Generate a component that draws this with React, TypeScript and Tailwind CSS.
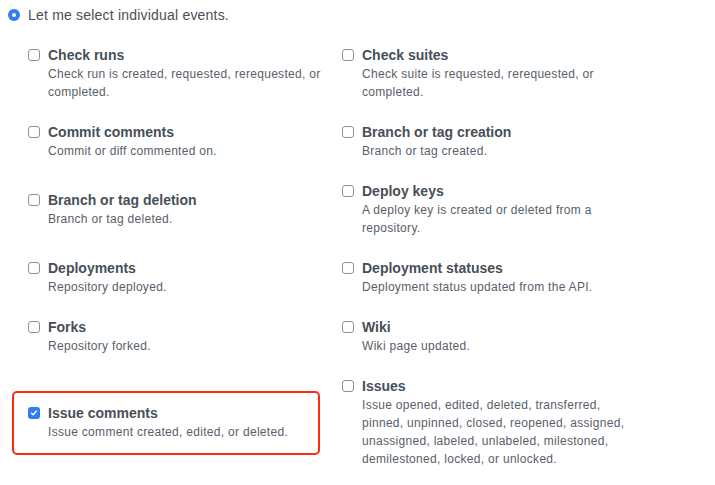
import React from "react";

interface HookEvent {
  title: string;
  description: string;
  checked?: boolean;
  highlighted?: boolean;
}

// rows of [left, right]
const rows: [HookEvent, HookEvent][] = [
  [
    { title: "Check runs", description: "Check run is created, requested, rerequested, or completed." },
    { title: "Check suites", description: "Check suite is requested, rerequested, or completed." },
  ],
  [
    { title: "Commit comments", description: "Commit or diff commented on." },
    { title: "Branch or tag creation", description: "Branch or tag created." },
  ],
  [
    { title: "Branch or tag deletion", description: "Branch or tag deleted." },
    { title: "Deploy keys", description: "A deploy key is created or deleted from a repository." },
  ],
  [
    { title: "Deployments", description: "Repository deployed." },
    { title: "Deployment statuses", description: "Deployment status updated from the API." },
  ],
  [
    { title: "Forks", description: "Repository forked." },
    { title: "Wiki", description: "Wiki page updated." },
  ],
  [
    {
      title: "Issue comments",
      description: "Issue comment created, edited, or deleted.",
      checked: true,
      highlighted: true,
    },
    {
      title: "Issues",
      description:
        "Issue opened, edited, deleted, transferred, pinned, unpinned, closed, reopened, assigned, unassigned, labeled, unlabeled, milestoned, demilestoned, locked, or unlocked.",
    },
  ],
];

function Checkbox({ checked }: { checked?: boolean }) {
  if (checked) {
    return (
      <span className="mt-1 flex h-3 w-3 shrink-0 items-center justify-center rounded-[3px] bg-[#2f7cf6]">
        <svg width="8" height="8" viewBox="0 0 8 8" fill="none">
          <path d="M1.5 4.2 L3.2 5.8 L6.5 2" stroke="white" strokeWidth="1.4" strokeLinecap="round" strokeLinejoin="round" />
        </svg>
      </span>
    );
  }
  return <span className="mt-1 h-3 w-3 shrink-0 rounded-[3px] border border-[#8f8f8f] bg-white" />;
}

function EventChoice({ item }: { item: HookEvent }) {
  return (
    <div className="relative flex gap-2">
      {item.highlighted && (
        <span className="pointer-events-none absolute -left-[16px] -top-[12px] -bottom-[14px] w-[308px] rounded-[5px] border-2 border-[#ff2a12]" />
      )}
      <Checkbox checked={item.checked} />
      <div className="w-[280px]">
        <div className="text-[14px] font-bold leading-[20px] text-[#474f58]">{item.title}</div>
        <div className="text-[12px] leading-[18px] tracking-[0.3px] text-[#586069]">{item.description}</div>
      </div>
    </div>
  );
}

export default function App() {
  return (
    <div className="h-[485px] w-[715px] overflow-hidden bg-white font-['Liberation_Sans',Arial,sans-serif]">
      <div className="flex items-center gap-2 pl-2 pt-[5px]">
        <span className="flex h-3 w-3 items-center justify-center rounded-full bg-[#2f7cf6]">
          <span className="h-1 w-1 rounded-full bg-white" />
        </span>
        <span className="text-[14px] leading-[20px] tracking-[0.2px] text-[#474f58]">Let me select individual events.</span>
      </div>

      <div className="mt-5 grid grid-cols-[314px_314px] items-center gap-y-[21px] pl-7">
        {rows.map(([left, right]) => (
          <React.Fragment key={left.title}>
            <EventChoice item={left} />
            <EventChoice item={right} />
          </React.Fragment>
        ))}
      </div>
    </div>
  );
}
